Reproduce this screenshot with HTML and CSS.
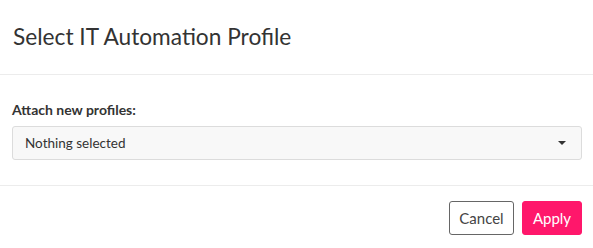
FILE: index.html
```html
<!DOCTYPE html>
<html>
<head>
<meta charset="utf-8">
<link rel="stylesheet" href="styles.css">
</head>
<body>
<div class="modal">
  <div class="modal-header">
    <h4 class="modal-title">Select IT Automation Profile</h4>
  </div>
  <div class="modal-body">
    <label class="field-label">Attach new profiles:</label>
    <div class="select">
      <span class="select-text">Nothing selected</span>
      <span class="caret"></span>
    </div>
  </div>
  <div class="modal-footer">
    <button class="btn btn-default">Cancel</button>
    <button class="btn btn-primary">Apply</button>
  </div>
</div>
</body>
</html>
```

FILE: styles.css
```css
* { box-sizing: border-box; }
html, body {
  margin: 0;
  padding: 0;
  background: #fff;
}
body {
  font-family: "Lato", "Liberation Sans", sans-serif;
  color: #333;
}
.modal {
  width: 593px;
  display: flex;
  flex-direction: column;
}
.modal-header {
  height: 75px;
  display: flex;
  align-items: center;
  padding: 0 12px 1px 13px;
  border-bottom: 1px solid #ececec;
}
.modal-title {
  margin: 0;
  font-size: 22.7px;
  font-weight: 400;
  color: #333;
  line-height: 30px;
}
.modal-body {
  padding: 25px 11px 25px 12px;
  border-bottom: 1px solid #ececec;
  display: flex;
  flex-direction: column;
}
.field-label {
  font-size: 14px;
  font-weight: 700;
  line-height: 20px;
  color: #333;
  margin-bottom: 6px;
}
.select {
  height: 34px;
  border: 1px solid #dcdcdc;
  border-radius: 3px;
  background: #f8f8f8;
  display: flex;
  align-items: center;
  justify-content: space-between;
  padding: 0 15px 0 12px;
}
.select-text {
  font-size: 13.5px;
  color: #333;
}
.caret {
  width: 0;
  height: 0;
  border-left: 4px solid transparent;
  border-right: 4px solid transparent;
  border-top: 4px solid #333;
}
.modal-footer {
  display: flex;
  justify-content: flex-end;
  gap: 8px;
  padding: 15px 11px 13px 12px;
}
.btn {
  height: 34px;
  font-family: inherit;
  font-size: 15px;
  border-radius: 3px;
  padding: 0;
  cursor: pointer;
}
.btn-default {
  background: #fff;
  border: 1px solid #666;
  color: #444;
  width: 65px;
}
.btn-primary {
  background: #ff176b;
  border: 1px solid #ff176b;
  color: #fff;
  width: 60px;
}
```
